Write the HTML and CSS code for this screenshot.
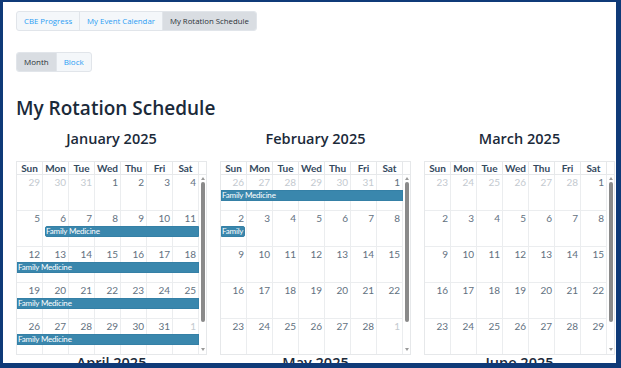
FILE: index.html
```html
<!DOCTYPE html>
<html lang="en">
<head>
  <meta charset="UTF-8">
  <title>My Rotation Schedule</title>
  <link rel="stylesheet" href="styles.css">
</head>
<body>
  <div class="window">
    <nav class="tabs">
      <a href="#">CBE Progress</a>
      <a href="#">My Event Calendar</a>
      <a href="#" class="active">My Rotation Schedule</a>
    </nav>

    <div class="toggle">
      <button class="active">Month</button>
      <button>Block</button>
    </div>

    <h1>My Rotation Schedule</h1>

    <div id="months" class="months"></div>
  </div>

  <script src="app.js"></script>
</body>
</html>
```

FILE: styles.css
```css
body {
  margin: 0;
  background-color: #0f3a78;
  font-family: "Open Sans", sans-serif;
}
.window {
  margin: 2px 5px 5px 3px;
  height: 361px;
  box-sizing: border-box;
  padding: 9px 0 0 13px;
  background-color: #fff;
  overflow: hidden;
}
.tabs, .toggle {
  display: flex;
  width: max-content;
  border: 1px solid #e1e5ea;
  border-radius: 3px;
  background-color: #f4f7fa;
  overflow: hidden;
}
.tabs a, .toggle button {
  display: block;
  height: 18px;
  line-height: 18px;
  padding: 0 7px;
  font-family: "Open Sans", sans-serif;
  font-size: 7.8px;
  font-weight: 500;
  color: #2a9df4;
  text-decoration: none;
  background: none;
  border: none;
  border-left: 1px solid #e1e5ea;
}
.tabs a:first-child, .toggle button:first-child {
  border-left: none;
}
.tabs a.active, .toggle button.active {
  background-color: #d9dde2;
  color: #2b3138;
}
.toggle {
  margin-top: 21px;
}
.toggle button {
  font-size: 8px;
}
h1 {
  margin: 24px 0 0;
  font-size: 19px;
  font-weight: 600;
  color: #1b2a3a;
  line-height: 24px;
}
.months {
  display: grid;
  grid-template-columns: repeat(3, 191px);
  column-gap: 13px;
  margin-top: 11px;
}
.month h2 {
  margin: 0 0 14px;
  text-align: center;
  font-size: 14.5px;
  font-weight: 600;
  line-height: 16px;
  color: #1b2a3a;
}
.cal {
  font-family: Lato, sans-serif;
}
.cal-head {
  display: grid;
  grid-template-columns: repeat(7, minmax(0, 1fr)) 7px;
  border: 1px solid #e6e8ea;
}
.th {
  height: 12px;
  line-height: 12px;
  text-align: center;
  font-size: 10px;
  font-weight: 700;
  color: #34495e;
  border-right: 1px solid #e6e8ea;
}
.th.spacer {
  border-right: none;
}
.cal-body {
  display: flex;
  height: 179px;
  border: 1px solid #e6e8ea;
  border-top: none;
}
.weeks {
  flex: 1;
  min-width: 0;
  overflow: hidden;
}
.scrollbar {
  width: 7px;
  display: flex;
  flex-direction: column;
  align-items: center;
  padding: 2px 0 3px;
  box-sizing: border-box;
}
.arrow-up, .arrow-down {
  width: 0;
  height: 0;
  border-left: 2px solid transparent;
  border-right: 2px solid transparent;
}
.arrow-up {
  border-bottom: 3px solid #9a9a9a;
}
.arrow-down {
  margin-top: auto;
  border-top: 3px solid #9a9a9a;
}
.thumb {
  width: 4px;
  height: 140px;
  margin-top: 2px;
  border-radius: 2px;
  background-color: #8a8a8a;
}
.week {
  display: grid;
  grid-template-columns: repeat(7, minmax(0, 1fr));
  grid-template-rows: 15px 11px 1fr;
  height: 36px;
  box-sizing: border-box;
  border-bottom: 1px solid #ebedef;
}
.day {
  grid-row: 1 / -1;
  padding: 1px 2px 0 0;
  text-align: right;
  font-size: 10px;
  line-height: 13px;
  color: #627180;
  border-right: 1px solid #ebedef;
}
.day:nth-child(1) { grid-column: 1; }
.day:nth-child(2) { grid-column: 2; }
.day:nth-child(3) { grid-column: 3; }
.day:nth-child(4) { grid-column: 4; }
.day:nth-child(5) { grid-column: 5; }
.day:nth-child(6) { grid-column: 6; }
.day:nth-child(7) { grid-column: 7; }
.day.other {
  color: #c4cad0;
}
.event {
  grid-row: 2;
  min-width: 0;
  padding-left: 0;
  background-color: #3a87ad;
  border: 1px solid #3580a6;
  color: #fff;
  font-size: 8px;
  letter-spacing: -0.2px;
  line-height: 9px;
  white-space: nowrap;
  overflow: hidden;
}
.event.starts {
  margin-left: 2px;
  border-top-left-radius: 2px;
  border-bottom-left-radius: 2px;
}
.event.ends {
  margin-right: 2px;
  border-top-right-radius: 2px;
  border-bottom-right-radius: 2px;
}
```

FILE: app.js
```js
const MONTHS = ["January", "February", "March", "April", "May", "June",
  "July", "August", "September", "October", "November", "December"];
const DAYS = ["Sun", "Mon", "Tue", "Wed", "Thu", "Fri", "Sat"];

const rotations = [
  { title: "Family Medicine", start: new Date(2025, 0, 6), end: new Date(2025, 1, 2) }
];

function addDays(d, n) {
  return new Date(d.getFullYear(), d.getMonth(), d.getDate() + n);
}

function diffDays(a, b) {
  return Math.round((a - b) / 86400000);
}

function buildMonth(year, month) {
  const section = document.createElement("section");
  section.className = "month";

  let html = `<h2>${MONTHS[month]} ${year}</h2><div class="cal"><div class="cal-head">`;
  html += DAYS.map(d => `<div class="th">${d}</div>`).join("");
  html += '<div class="th spacer"></div></div><div class="cal-body"><div class="weeks">';

  const first = new Date(year, month, 1);
  let day = addDays(first, -first.getDay());

  for (let w = 0; w < 6; w++) {
    const weekStart = day;
    const weekEnd = addDays(weekStart, 6);
    html += '<div class="week">';
    for (let i = 0; i < 7; i++) {
      const other = day.getMonth() !== month ? " other" : "";
      html += `<div class="day${other}">${day.getDate()}</div>`;
      day = addDays(day, 1);
    }
    rotations.forEach(r => {
      if (r.start > weekEnd || r.end < weekStart) return;
      const segStart = r.start > weekStart ? r.start : weekStart;
      const segEnd = r.end < weekEnd ? r.end : weekEnd;
      const from = diffDays(segStart, weekStart) + 1;
      const to = diffDays(segEnd, weekStart) + 2;
      let cls = "event";
      if (r.start >= weekStart) cls += " starts";
      if (r.end <= weekEnd) cls += " ends";
      html += `<div class="${cls}" style="grid-column:${from} / ${to}">${r.title}</div>`;
    });
    html += "</div>";
  }

  html += '</div><div class="scrollbar"><span class="arrow-up"></span><span class="thumb"></span><span class="arrow-down"></span></div>';
  html += "</div></div>";
  section.innerHTML = html;
  return section;
}

const container = document.getElementById("months");
for (let m = 0; m < 6; m++) {
  container.appendChild(buildMonth(2025, m));
}
```
